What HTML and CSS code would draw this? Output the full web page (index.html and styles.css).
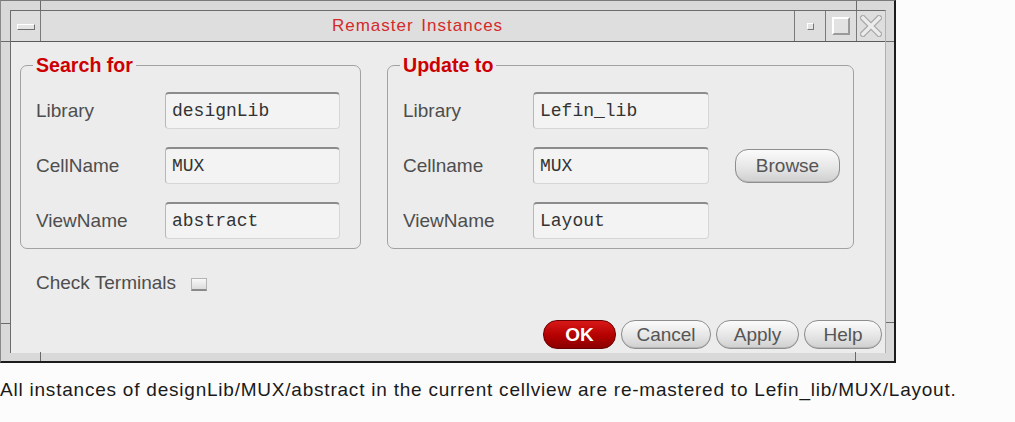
FILE: index.html
```html
<!DOCTYPE html>
<html>
<head>
<meta charset="utf-8">
<link rel="stylesheet" href="styles.css">
</head>
<body>
<div class="window">
  <span class="mark mark-v mark-tl"></span>
  <span class="mark mark-v mark-tr"></span>
  <span class="mark mark-v mark-bl"></span>
  <span class="mark mark-v mark-br"></span>
  <span class="mark mark-h mark-lt"></span>
  <span class="mark mark-h mark-lb"></span>
  <span class="mark mark-h mark-rt"></span>
  <span class="mark mark-h mark-rb"></span>
  <div class="inner">
    <div class="titlebar">
      <div class="tb-menu"><span class="menu-bar"></span></div>
      <div class="tb-title">Remaster Instances</div>
      <div class="tb-btn"><span class="min-sq"></span></div>
      <div class="tb-btn tb-max"><span class="max-sq"></span></div>
      <div class="tb-btn tb-close">
        <svg width="22" height="22" viewBox="0 0 22 22">
          <path d="M3 3 L19 19 M19 3 L3 19" stroke="#a8a8a8" stroke-width="6" stroke-linecap="square" fill="none"/>
          <path d="M3 3 L19 19 M19 3 L3 19" stroke="#ececec" stroke-width="3.4" stroke-linecap="square" fill="none"/>
        </svg>
      </div>
    </div>
    <div class="content">
      <div class="groups">
        <fieldset class="group group-search">
          <legend>Search for</legend>
          <div class="form">
            <span class="label">Library</span><span class="field">designLib</span>
            <span class="label">CellName</span><span class="field">MUX</span>
            <span class="label">ViewName</span><span class="field">abstract</span>
          </div>
        </fieldset>
        <fieldset class="group group-update">
          <legend>Update to</legend>
          <div class="form form-update">
            <span class="label">Library</span><span class="field">Lefin_lib</span><span></span>
            <span class="label">Cellname</span><span class="field">MUX</span><span class="btn btn-browse">Browse</span>
            <span class="label">ViewName</span><span class="field">Layout</span><span></span>
          </div>
        </fieldset>
      </div>
      <div class="check-row">
        <span class="label">Check Terminals</span>
        <span class="checkbox"></span>
      </div>
      <div class="buttons">
        <span class="btn btn-ok">OK</span>
        <span class="btn btn-cancel">Cancel</span>
        <span class="btn btn-apply">Apply</span>
        <span class="btn btn-help">Help</span>
      </div>
    </div>
  </div>
</div>
<p class="caption">All instances of designLib/MUX/abstract in the current cellview are re-mastered to Lefin_lib/MUX/Layout.</p>
</body>
</html>
```
FILE: styles.css
```css
html, body {
  margin: 0;
  padding: 0;
  background: #fcfcfc;
}

body {
  font-family: "Liberation Sans", Arial, sans-serif;
}

.window {
  position: relative;
  box-sizing: border-box;
  width: 896px;
  height: 363px;
  background: #d9d9d9;
  border-top: 1px solid #7a7a7a;
  border-left: 1px solid #8a8a8a;
  border-right: 2px solid #1c1c1c;
  border-bottom: 2px solid #1c1c1c;
  padding: 9px 8px 8px 9px;
}

.mark {
  position: absolute;
  background: #6a6a6a;
}
.mark-v { width: 1px; height: 10px; }
.mark-h { height: 1px; width: 10px; }
.mark-tl { left: 39px; top: 0; }
.mark-tr { left: 855px; top: 0; }
.mark-bl { left: 39px; bottom: 0; height: 9px; }
.mark-br { left: 854px; bottom: 0; height: 9px; }
.mark-lt { left: 0; top: 40px; width: 9px; }
.mark-lb { left: 0; top: 322px; width: 9px; }
.mark-rt { right: 0; top: 40px; width: 8px; }
.mark-rb { right: 0; top: 321px; width: 8px; }

.inner {
  box-sizing: border-box;
  height: 343px;
  border-top: 1px solid #6c6c6c;
  border-left: 1px solid #6c6c6c;
  border-right: 1px solid #b0b0b0;
  display: flex;
  flex-direction: column;
}

.titlebar {
  height: 30px;
  flex: 0 0 30px;
  display: flex;
  background: #dedede;
  border-bottom: 1px solid #5a5a5a;
}

.tb-menu {
  width: 29px;
  border-right: 1px solid #7a7a7a;
  display: flex;
  align-items: center;
  justify-content: center;
}

.menu-bar {
  box-sizing: border-box;
  width: 18px;
  height: 6px;
  margin-top: 2px;
  background: #e4e4e4;
  border: 1px solid;
  border-color: #ffffff #6e6e6e #6e6e6e #ffffff;
}

.tb-title {
  flex: 1;
  display: flex;
  align-items: center;
  justify-content: center;
  color: #d42a2a;
  font-size: 17px;
  letter-spacing: 1px;
  word-spacing: 2px;
}

.tb-btn {
  width: 30px;
  border-left: 1px solid #7a7a7a;
  display: flex;
  align-items: center;
  justify-content: center;
}

.tb-max { width: 30px; }
.tb-close { width: 28px; }

.min-sq {
  box-sizing: border-box;
  width: 7px;
  height: 7px;
  background: #e4e4e4;
  border: 1px solid;
  border-color: #ffffff #777777 #777777 #ffffff;
}

.max-sq {
  box-sizing: border-box;
  width: 18px;
  height: 18px;
  background: #e2e2e2;
  border: 2px solid;
  border-color: #ffffff #9a9a9a #9a9a9a #ffffff;
}

.content {
  flex: 1;
  display: flex;
  flex-direction: column;
  background: #ececec;
  padding: 0 3px 4px 9px;
}

.groups {
  display: flex;
  gap: 26px;
  margin-top: 12px;
}

.group {
  margin: 0;
  border: 1px solid #a2a2a2;
  border-radius: 7px;
  padding: 16px 20px 9px 15px;
  min-width: 0;
}

.group-search { width: 341px; box-sizing: border-box; }
.group-update { width: 467px; box-sizing: border-box; padding-right: 12px; }

legend {
  color: #cc0000;
  font-weight: bold;
  font-size: 19.6px;
  line-height: 22px;
  padding: 0 3px;
  margin-left: -3px;
}

.form {
  display: grid;
  grid-template-columns: 129px 175px;
  grid-auto-rows: 37px;
  row-gap: 18px;
  align-items: center;
}

.form-update {
  grid-template-columns: 130px 176px 105px;
  column-gap: 0;
}

.form-update .btn-browse {
  margin-left: 26px;
}

.label {
  color: #4e4e4e;
  font-size: 19px;
  line-height: 22px;
}

.field {
  box-sizing: border-box;
  height: 37px;
  display: flex;
  align-items: center;
  padding: 0 6px;
  background: #f3f3f3;
  border: 1px solid #d6d6d6;
  border-top: 2px solid #8c8c8c;
  border-left-color: #b8b8b8;
  border-radius: 4px;
  font-family: "Liberation Mono", "Courier New", monospace;
  font-size: 18px;
  color: #333333;
}

.btn {
  box-sizing: border-box;
  display: flex;
  align-items: center;
  justify-content: center;
  height: 29px;
  border-radius: 14px;
  border: 1px solid #8e8e8e;
  background: linear-gradient(#fbfbfb, #e6e6e6 55%, #cfcfcf);
  box-shadow: inset 0 -1px 0 #b8b8b8;
  color: #555555;
  font-size: 19px;
}

.btn-browse {
  width: 105px;
  height: 34px;
  border-radius: 13px;
}

.check-row {
  display: flex;
  align-items: center;
  margin-top: 23px;
  padding-left: 16px;
}

.checkbox {
  box-sizing: border-box;
  width: 16px;
  height: 13px;
  margin-left: 15px;
  margin-top: 2px;
  background: linear-gradient(#f8f8f8, #dcdcdc);
  border: 1px solid #b4b4b4;
  border-bottom: 2px solid #8a8a8a;
}

.buttons {
  margin-top: auto;
  display: flex;
  justify-content: flex-end;
  gap: 5px;
}

.btn-ok {
  width: 73px;
  background: linear-gradient(#d81818, #b30000 55%, #8c0000);
  border-color: #6a0000;
  box-shadow: none;
  color: #ffffff;
  font-weight: bold;
}
.btn-cancel { width: 90px; }
.btn-apply { width: 83px; }
.btn-help { width: 78px; }

.caption {
  margin: 16px 0 0 0;
  font-family: "Liberation Sans", Arial, sans-serif;
  font-size: 19px;
  letter-spacing: 0.78px;
  line-height: 22px;
  color: #1a1a1a;
  white-space: nowrap;
}
```
